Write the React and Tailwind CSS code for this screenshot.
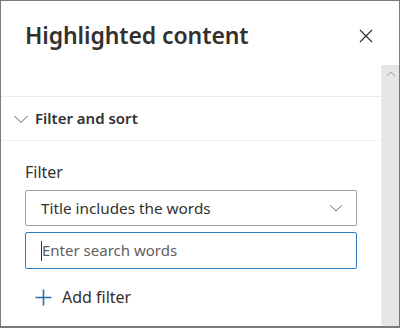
const ChevronDown = ({ className }) => (
	<svg className={className} viewBox="0 0 16 16" fill="none" stroke="currentColor" strokeWidth={1}>
		<path d="M1.5 5l6.5 6.5L14.5 5" />
	</svg>
)

const App = () => {
	return (
		<div className="flex h-[328px] w-[400px] flex-col overflow-hidden border border-b-2 border-[#7a7a7a] bg-white font-['Noto_Sans',sans-serif] text-[#323130]">
			<header className="flex h-[64px] shrink-0 items-start justify-between pl-[24px] pr-[26px] pt-[18px]">
				<h1 className="text-[23px] font-semibold leading-[32px] tracking-[-0.1px] text-[#323130]">Highlighted content</h1>
				<button className="mt-[10px] text-[#323130]">
					<svg className="h-[14px] w-[14px]" viewBox="0 0 14 14" fill="none" stroke="currentColor" strokeWidth={1.2}>
						<path d="M1 1l12 12M13 1L1 13" />
					</svg>
				</button>
			</header>

			<div className="flex min-h-0 flex-1">
				<div className="flex-1">
					<div className="h-[31px]" />
					<div className="border-t border-[#edebe9]">
						<button className="flex h-[44px] w-full items-center gap-[6px] border-b border-[#f3f2f1] pl-[12px] text-left">
							<ChevronDown className="h-[16px] w-[16px] text-[#605e5c]" />
							<span className="text-[15px] font-semibold text-[#323130]">Filter and sort</span>
						</button>
						<div className="px-[24px] pt-[20px]">
							<label className="block text-[16px] leading-[22px] text-[#323130]">Filter</label>
							<div className="mt-[7px] flex h-[36px] w-[332px] items-center justify-between rounded-[2px] border border-[#a19f9d] pl-[15px] pr-[13px]">
								<span className="text-[15.3px] text-[#323130]">Title includes the words</span>
								<ChevronDown className="h-[14px] w-[14px] text-[#605e5c]" />
							</div>
							<div className="mt-[6px] flex h-[37px] w-[332px] items-center rounded-[2px] border border-[#2b7bc0] pl-[15px]">
								<span className="h-[20px] w-px bg-[#323130]" />
								<span className="text-[15px] text-[#605e5c]">Enter search words</span>
							</div>
							<button className="mt-[16px] flex items-center gap-[10px] pl-[10px]">
								<svg className="h-[17px] w-[17px] text-[#2b6cb0]" viewBox="0 0 17 17" fill="none" stroke="currentColor" strokeWidth={1.6}>
									<path d="M8.5 0.5v16M0.5 8.5h16" />
								</svg>
								<span className="text-[16px] text-[#323130]">Add filter</span>
							</button>
						</div>
					</div>
				</div>
				<div className="w-[18px] shrink-0 border-l border-[#ededed] bg-[#e6e6e6]">
					<svg className="mx-auto mt-[5px] h-[8px] w-[10px] text-[#a0a0a0]" viewBox="0 0 10 8" fill="none" stroke="currentColor" strokeWidth={1}>
						<path d="M1 6l4-4 4 4" />
					</svg>
				</div>
			</div>
		</div>
	)
}

export default App
